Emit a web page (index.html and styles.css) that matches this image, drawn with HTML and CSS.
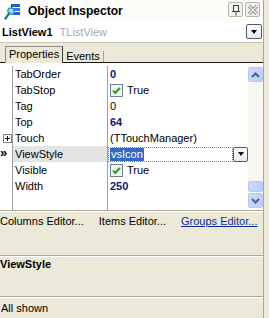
FILE: index.html
```html
<!DOCTYPE html>
<html>
<head>
<meta charset="utf-8">
<link rel="stylesheet" href="styles.css">
</head>
<body>
<div class="win">
  <div class="title">
    <svg class="ticon" width="17" height="17" viewBox="0 0 17 17">
      <rect x="8" y="1" width="8" height="3" fill="#2a5bd0"/>
      <rect x="8" y="5" width="8" height="3" fill="#3b73e0"/>
      <rect x="9" y="9" width="7" height="3" fill="#2a5bd0"/>
      <rect x="7" y="1" width="1" height="11" fill="#1a3f9a"/>
      <circle cx="7" cy="8" r="3.2" fill="#7fe3f0" stroke="#1f8fb0" stroke-width="1.2"/>
      <line x1="5" y1="10.5" x2="1.5" y2="15.5" stroke="#1c7a96" stroke-width="2.2" stroke-linecap="round"/>
    </svg>
    <span class="ttext">Object Inspector</span>
    <span class="tbtns">
      <span class="tbtn">
        <svg width="12" height="12" viewBox="0 0 12 12">
          <rect x="3.5" y="1.5" width="5" height="6" fill="none" stroke="#404040"/>
          <line x1="2" y1="7.5" x2="10" y2="7.5" stroke="#404040"/>
          <line x1="6" y1="8" x2="6" y2="11.5" stroke="#404040"/>
        </svg>
      </span>
      <span class="tbtn">
        <svg width="12" height="12" viewBox="0 0 12 12">
          <path d="M2 2 L10 10 M10 2 L2 10" stroke="#8a8a8a" stroke-width="3.2"/>
          <path d="M2 2 L10 10 M10 2 L2 10" stroke="#f4f3ee" stroke-width="1.4"/>
        </svg>
      </span>
    </span>
  </div>

  <div class="combo">
    <span class="cname">ListView1</span>
    <span class="ctype">TListView</span>
    <span class="ddbtn big"><span class="tri"></span></span>
  </div>

  <div class="tabs">
    <div class="tab active">Properties</div>
    <div class="tab"><span class="tabsep">Events</span></div>
  </div>

  <div class="gridwrap">
    <div class="grid">
      <div class="row">
        <div class="gut"></div>
        <div class="name">TabOrder</div>
        <div class="val"><span class="bv">0</span></div>
      </div>
      <div class="row">
        <div class="gut"></div>
        <div class="name">TabStop</div>
        <div class="val">
          <svg class="chk" width="13" height="13" viewBox="0 0 13 13">
            <rect x="0.5" y="0.5" width="12" height="12" fill="#f4f4f0" stroke="#6f8299"/>
            <path d="M3 6.5 L5.3 9 L10 3.8" fill="none" stroke="#21a121" stroke-width="2"/>
          </svg>
          <span>True</span>
        </div>
      </div>
      <div class="row">
        <div class="gut"></div>
        <div class="name">Tag</div>
        <div class="val">0</div>
      </div>
      <div class="row">
        <div class="gut"></div>
        <div class="name">Top</div>
        <div class="val"><span class="bv">64</span></div>
      </div>
      <div class="row">
        <div class="gut">
          <svg class="plus" width="9" height="9" viewBox="0 0 9 9">
            <rect x="0.5" y="0.5" width="8" height="8" fill="#fff" stroke="#808080"/>
            <path d="M2 4.5 H7 M4.5 2 V7" stroke="#000"/>
          </svg>
        </div>
        <div class="name">Touch</div>
        <div class="val">(TTouchManager)</div>
      </div>
      <div class="row sel">
        <div class="gut"><span class="arrow">»</span></div>
        <div class="name">ViewStyle</div>
        <div class="val edit">
          <span class="editbox"><span class="hl">vsIcon</span></span>
          <span class="ddbtn small"><span class="tri"></span></span>
        </div>
      </div>
      <div class="row">
        <div class="gut"></div>
        <div class="name">Visible</div>
        <div class="val">
          <svg class="chk" width="13" height="13" viewBox="0 0 13 13">
            <rect x="0.5" y="0.5" width="12" height="12" fill="#f4f4f0" stroke="#6f8299"/>
            <path d="M3 6.5 L5.3 9 L10 3.8" fill="none" stroke="#21a121" stroke-width="2"/>
          </svg>
          <span>True</span>
        </div>
      </div>
      <div class="row">
        <div class="gut"></div>
        <div class="name">Width</div>
        <div class="val"><span class="bv">250</span></div>
      </div>
      <div class="rest">
        <div class="gut"></div>
        <div class="name"></div>
        <div class="val"></div>
      </div>
    </div>
    <div class="vscroll">
      <span class="sbtn">
        <svg width="9" height="6" viewBox="0 0 9 6"><path d="M1 5 L4.5 1.5 L8 5" fill="none" stroke="#4d6185" stroke-width="2"/></svg>
      </span>
      <span class="track"></span>
      <span class="thumb"></span>
      <span class="sbtn">
        <svg width="9" height="6" viewBox="0 0 9 6"><path d="M1 1 L4.5 4.5 L8 1" fill="none" stroke="#4d6185" stroke-width="2"/></svg>
      </span>
    </div>
  </div>

  <div class="editors">
    <span>Columns Editor...</span>
    <span>Items Editor...</span>
    <span class="link">Groups Editor...</span>
  </div>

  <div class="spacer"></div>

  <div class="desc">ViewStyle</div>

  <div class="status">All shown</div>
</div>
</body>
</html>
```

FILE: styles.css
```css
html, body {
  margin: 0;
  padding: 0;
}
body {
  background: #ece9d8;
  font-family: "Liberation Sans", Arial, sans-serif;
  font-size: 11px;
  color: #000;
  width: 269px;
  height: 318px;
  overflow: hidden;
}
.win {
  width: 263px;
  height: 318px;
  border-right: 1px solid #aca899;
  display: flex;
  flex-direction: column;
}

/* title bar */
.title {
  height: 21px;
  flex: none;
  background: #fbfbf8;
  display: flex;
  align-items: center;
}
.ticon {
  margin-left: 4px;
  margin-top: 1px;
}
.ttext {
  margin-left: 7px;
  font-weight: bold;
  font-size: 12px;
}
.tbtns {
  margin-left: auto;
  margin-right: 3px;
  display: flex;
  gap: 2px;
  margin-top: -2px;
}
.tbtn {
  width: 13px;
  height: 13px;
  border: 1px solid #b9b6a8;
  border-radius: 2px;
  background: #f2f1ea;
  display: flex;
  align-items: center;
  justify-content: center;
}

/* combo */
.combo {
  height: 21px;
  flex: none;
  background: #fff;
  border-bottom: 1px solid #c9c6b8;
  display: flex;
  align-items: center;
  padding-left: 2px;
}
.cname {
  font-weight: bold;
}
.ctype {
  color: #a8a8a8;
  margin-left: 7px;
}
.ddbtn {
  display: flex;
  align-items: center;
  justify-content: center;
  border: 1px solid #4f5d72;
  border-radius: 2px;
  background: linear-gradient(#ffffff, #e6e8ee);
  box-sizing: border-box;
}
.ddbtn.big {
  margin-left: auto;
  margin-right: 1px;
  width: 16px;
  height: 15px;
}
.ddbtn.small {
  width: 15px;
  height: 15px;
}
.tri {
  width: 0;
  height: 0;
  border-left: 3.5px solid transparent;
  border-right: 3.5px solid transparent;
  border-top: 4px solid #000;
}

/* tabs */
.tabs {
  height: 19px;
  flex: none;
  border-bottom: 1px solid #1a1a1a;
  display: flex;
  align-items: flex-end;
  padding-left: 5px;
}
.tab {
  height: 15px;
  line-height: 16px;
  padding: 0 3px 0 3px;
  margin-bottom: -1px;
  box-sizing: content-box;
}
.tab.active {
  height: 16px;
  border: 1px solid #8f8d82;
  border-right-color: #404040;
  border-bottom: none;
  background: #ece9d8;
  padding-bottom: 0;
  line-height: 15px;
}
.tabsep {
  display: inline-block;
  padding-right: 3px;
  border-right: 1px solid #a8a59a;
  line-height: 11px;
  margin-top: 3px;
}

/* grid */
.gridwrap {
  height: 147px;
  flex: none;
  display: flex;
  background: #fff;
  border-bottom: 1px solid #aca899;
}
.grid {
  width: 248px;
  display: flex;
  flex-direction: column;
  padding-top: 3px;
  box-sizing: border-box;
}
.row, .rest {
  display: flex;
  height: 16px;
  line-height: 16px;
}
.rest {
  flex: 1;
}
.gut {
  width: 12px;
  border-right: 1px solid #a0a0a0;
  position: relative;
  flex: none;
}
.name {
  width: 92px;
  padding-left: 2px;
  border-right: 1px solid #a0a0a0;
  flex: none;
  white-space: nowrap;
}
.val {
  flex: 1;
  padding-left: 2px;
  display: flex;
  align-items: center;
  white-space: nowrap;
}
.bv {
  font-weight: bold;
  color: #15156b;
}
.chk {
  margin-right: 4px;
  flex: none;
}
.plus {
  margin: 4px 0 0 3px;
  display: block;
}
.arrow {
  font-weight: bold;
  font-size: 13px;
  line-height: 14px;
  display: block;
  margin-left: 0;
}
.sel .name {
  background: #e4e4e4;
}
.val.edit {
  padding-left: 0;
}
.editbox {
  flex: 1;
  height: 15px;
  border: 1px dotted #7a7a7a;
  box-sizing: border-box;
  display: flex;
  align-items: center;
  padding-left: 1px;
}
.hl {
  background: #316ac5;
  color: #fff;
  line-height: 13px;
  padding: 0 1px;
}

/* scrollbar */
.vscroll {
  width: 15px;
  margin-top: 4px;
  margin-bottom: 2px;
  display: flex;
  flex-direction: column;
  background: #f7f6f1;
}
.sbtn, .thumb {
  flex: none;
  box-sizing: border-box;
  border: 1px solid #b7c9f0;
  border-radius: 2px;
  background: linear-gradient(90deg, #cbdaf9, #bccffb);
  display: flex;
  align-items: center;
  justify-content: center;
}
.sbtn {
  height: 15px;
}
.track {
  flex: 1;
}
.thumb {
  height: 11px;
  margin-bottom: 1px;
}

/* editors line */
.editors {
  height: 18px;
  flex: none;
  line-height: 18px;
  display: flex;
  gap: 15px;
  border-top: 1px solid #fff;
  box-sizing: border-box;
  white-space: nowrap;
}
.link {
  color: #0b2d9c;
  text-decoration: underline;
}
.spacer {
  flex: 1;
}
.desc {
  height: 41px;
  flex: none;
  box-sizing: border-box;
  border-top: 1px solid #aca899;
  box-shadow: inset 0 1px 0 #fff;
  font-weight: bold;
  line-height: 14px;
  padding-top: 1px;
}
.status {
  height: 22px;
  flex: none;
  box-sizing: border-box;
  border-top: 1px solid #aca899;
  box-shadow: inset 0 1px 0 #fff;
  line-height: 23px;
  padding-left: 1px;
}
```
